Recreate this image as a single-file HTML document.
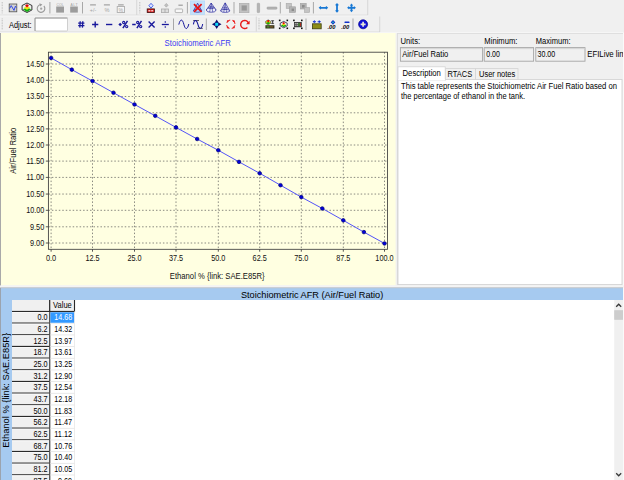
<!DOCTYPE html><html><head><meta charset="utf-8"><title>Stoichiometric AFR</title>
<style>html,body{margin:0;padding:0;background:#f0f0f0;overflow:hidden}svg{display:block;font-family:'Liberation Sans',sans-serif}text{font-family:'Liberation Sans',sans-serif}</style></head><body>
<svg width="624" height="480" viewBox="0 0 624 480">
<rect width="624" height="480" fill="#f0f0f0"/>
<g id="toolbars">
<rect x="0" y="15.3" width="368" height="1" fill="#fafafa"/>
<rect x="0" y="14.6" width="368" height="0.8" fill="#dcdcdc"/>
<rect x="0" y="31.6" width="380" height="0.9" fill="#d8d8d8"/>
<rect x="0" y="32.4" width="624" height="0.8" fill="#fbfbfb"/>
<rect x="136.4" y="0" width="0.8" height="15" fill="#cfcfcf"/>
<rect x="367.4" y="0" width="0.8" height="15" fill="#cfcfcf"/>
<rect x="255.8" y="16.5" width="0.8" height="15" fill="#cfcfcf"/>
<rect x="379.4" y="16.5" width="0.8" height="15.5" fill="#cfcfcf"/>
<line x1="2.2" y1="2" x2="2.2" y2="13.5" stroke="#b4b4b4" stroke-width="1" stroke-dasharray="0.8 0.8"/>
<line x1="139.8" y1="2" x2="139.8" y2="13.5" stroke="#b4b4b4" stroke-width="1" stroke-dasharray="0.8 0.8"/>
<line x1="2.2" y1="18.5" x2="2.2" y2="30.0" stroke="#b4b4b4" stroke-width="1" stroke-dasharray="0.8 0.8"/>
<line x1="259" y1="18.5" x2="259" y2="30.0" stroke="#b4b4b4" stroke-width="1" stroke-dasharray="0.8 0.8"/>
<rect x="49.4" y="2" width="1" height="11.5" fill="#a8a8a8"/>
<rect x="82.0" y="2" width="1" height="11.5" fill="#a8a8a8"/>
<rect x="186.9" y="2" width="1" height="11.5" fill="#a8a8a8"/>
<rect x="233.5" y="2" width="1" height="11.5" fill="#a8a8a8"/>
<rect x="279.8" y="2" width="1" height="11.5" fill="#a8a8a8"/>
<rect x="312.9" y="2" width="1" height="11.5" fill="#a8a8a8"/>
<rect x="173.0" y="18.5" width="1" height="11.5" fill="#a8a8a8"/>
<rect x="205.8" y="18.5" width="1" height="11.5" fill="#a8a8a8"/>
<rect x="305.5" y="18.5" width="1" height="11.5" fill="#a8a8a8"/>
<rect x="352.5" y="18.5" width="1" height="11.5" fill="#a8a8a8"/>
</g>
<g id="icons-row1">
<!-- chart icon -->
<rect x="9.2" y="4" width="7.6" height="7.8" fill="#d2d2d2" stroke="#505050" stroke-width="0.8"/>
<path d="M9.8 8.4 L11.2 5.6 L12.6 8 L14 10.4 L15.4 6.2 L16.2 7.6" fill="none" stroke="#3048e8" stroke-width="1"/>
<!-- cube icon -->
<path d="M27 3 L31.9 5.5 L31.9 10 L27 12.5 L22.1 10 L22.1 5.5 Z" fill="#f0f0f0" stroke="#1c1c1c" stroke-width="0.9"/>
<path d="M22.8 9.2 L27 7.4 L31.2 9.2 L27 12 Z" fill="#10b010"/>
<path d="M23.8 7.8 L27 6 L30.2 7.8 L27 9.8 Z" fill="#f4e418"/>
<path d="M25 5.8 L27 4 L29 5.8 L27 7.6 Z" fill="#e00808"/>
<!-- refresh grey -->
<path d="M43.9 6 A3.8 3.8 0 1 1 40.2 4.8" fill="none" stroke="#9c9c9c" stroke-width="1.15"/>
<path d="M39.4 3.2 L42.4 4.6 L40.2 6.6 Z" fill="#9c9c9c"/>
<circle cx="41.2" cy="8.7" r="1.15" fill="#a4a4a4"/>
<!-- COL / ALT -->
<text x="56.6" y="6" font-size="3.4" fill="#a0a0a0" textLength="7">COL</text>
<rect x="56.2" y="6.5" width="7.8" height="6.1" fill="#9c9c9c"/>
<text x="70.6" y="6" font-size="3.4" fill="#a0a0a0" textLength="7">ALT</text>
<rect x="70.2" y="6.5" width="7.6" height="6.1" fill="#9c9c9c"/>
<!-- +/- , %, [%] -->
<rect x="90" y="4.2" width="6" height="1.4" rx="0.5" fill="#a4a4a4"/>
<text x="93" y="11.6" font-size="5.4" fill="#a4a4a4" text-anchor="middle">+/-</text>
<rect x="103.8" y="4.2" width="6.2" height="1.4" rx="0.5" fill="#a4a4a4"/>
<text x="107" y="11.8" font-size="5.6" fill="#a4a4a4" text-anchor="middle">%</text>
<rect x="118" y="4.2" width="5.8" height="1.4" rx="0.5" fill="#a4a4a4"/>
<rect x="117.2" y="6.6" width="7.4" height="5.8" fill="#f6f6f6" stroke="#a4a4a4" stroke-width="0.8"/>
<text x="120.9" y="11.6" font-size="5.2" fill="#a4a4a4" text-anchor="middle">%</text>
<!-- red box w/ blue arrow -->
<path d="M151 3.3 L153.1 5.7 L151 8.1 L148.9 5.7 Z" fill="#dfe4ff" stroke="#3858e8" stroke-width="0.9"/>
<rect x="147.2" y="8.9" width="7.2" height="3.7" fill="#d81818" stroke="#3a1010" stroke-width="0.8"/>
<rect x="148.4" y="10.1" width="2" height="1.3" fill="#f6dada"/><rect x="151.2" y="10.1" width="2" height="1.3" fill="#f6dada"/>
<!-- grey diamond + box -->
<path d="M166.3 3.4 L168.1 5.3 L166.3 7.2 L164.5 5.3 Z" fill="#c0c0c0" stroke="#9c9c9c" stroke-width="0.5"/>
<rect x="161.4" y="9" width="7.2" height="3.6" fill="#dedede" stroke="#acacac" stroke-width="0.8"/>
<rect x="164.6" y="9" width="0.8" height="3.6" fill="#a6a6a6"/>
<!-- grey minus + box -->
<rect x="178.4" y="4.6" width="4.4" height="1.2" fill="#9c9c9c"/>
<rect x="175.2" y="9" width="7.4" height="3.6" rx="0.6" fill="#f8f8f8" stroke="#a6a6a6" stroke-width="0.8"/>
<!-- highlighted cone with X -->
<rect x="190.3" y="0.9" width="14.4" height="13.6" fill="#c4e0fa" stroke="#b2d6f8" stroke-width="0.6"/>
<path d="M197.6 3.2 L201.6 10.6 L193.6 10.6 Z" fill="#b4c8f4" stroke="#24249a" stroke-width="0.7"/>
<ellipse cx="197.6" cy="10.6" rx="4" ry="1.7" fill="#b4c8f4" stroke="#24249a" stroke-width="0.7"/>
<path d="M194 4.2 L201.6 12 M201.6 4.2 L194 12" stroke="#e81010" stroke-width="1.7" fill="none"/>
<!-- cone 1 -->
<path d="M211.2 3 L216 10 L206.4 10 Z" fill="#eceef8" stroke="#24249a" stroke-width="0.7"/>
<ellipse cx="211.2" cy="10" rx="4.7" ry="2.2" fill="#eceef8" stroke="#24249a" stroke-width="0.7"/>
<path d="M211.2 3.2 L209.6 12 M211.2 3.2 L212.8 12" stroke="#24249a" stroke-width="0.55" fill="none"/>
<ellipse cx="211.2" cy="7.6" rx="2.6" ry="1.1" fill="none" stroke="#24249a" stroke-width="0.55"/>
<!-- cone 2 -->
<path d="M225.2 2.8 L229.8 10.9 L220.6 10.9 Z" fill="#eceef8" stroke="#24249a" stroke-width="0.7"/>
<ellipse cx="225.2" cy="10.9" rx="4.5" ry="1.5" fill="#eceef8" stroke="#24249a" stroke-width="0.7"/>
<path d="M225.2 3 L223.8 12.2 M225.2 3 L226.6 12.2" stroke="#24249a" stroke-width="0.55" fill="none"/>
<ellipse cx="225.2" cy="8.2" rx="2.4" ry="0.9" fill="none" stroke="#24249a" stroke-width="0.55"/>
<!-- grey square, vbar, hbar -->
<rect x="239.4" y="3.3" width="9.6" height="9.4" fill="#c2c2c2" stroke="#a8a8a8" stroke-width="0.6"/>
<rect x="241.6" y="5.4" width="5.2" height="5.2" fill="#989898"/>
<rect x="257.2" y="3.2" width="2.4" height="9.4" rx="0.6" fill="#b4b4b4" stroke="#9a9a9a" stroke-width="0.5"/>
<rect x="267" y="7" width="10" height="2.2" rx="0.8" fill="#b4b4b4" stroke="#9a9a9a" stroke-width="0.5"/>
<!-- overlapping squares x2 -->
<rect x="286.2" y="3.4" width="5.2" height="5" fill="#c4c4c4" stroke="#a8a8a8" stroke-width="0.6"/>
<rect x="289.4" y="6.8" width="6.2" height="5.6" fill="#b4b4b4" stroke="#a0a0a0" stroke-width="0.6"/>
<rect x="291.6" y="8.6" width="2.4" height="2.4" fill="#8c8c8c"/>
<rect x="300.4" y="3.4" width="5.8" height="5.6" fill="#b4b4b4" stroke="#a0a0a0" stroke-width="0.6"/>
<rect x="302" y="5" width="2.6" height="2.6" fill="#8c8c8c"/>
<rect x="304.6" y="7.6" width="5" height="4.8" fill="#c4c4c4" stroke="#a8a8a8" stroke-width="0.6"/>
<!-- blue arrows -->
<path d="M318.6 7.8 L320.6 6 L321.2 6.9 L325.6 6.9 L326.2 6 L328.2 7.8 L326.2 9.6 L325.6 8.7 L321.2 8.7 L320.6 9.6 Z" fill="#1878d4"/>
<path d="M337 3.1 L338.8 5.1 L337.9 5.7 L337.9 10.1 L338.8 10.7 L337 12.7 L335.2 10.7 L336.1 10.1 L336.1 5.7 L335.2 5.1 Z" fill="#1878d4"/>
<path d="M351.5 3.4 L353.2 5.4 L352.4 5.4 L352.4 6.9 L353.9 6.9 L353.9 6.1 L355.9 7.8 L353.9 9.5 L353.9 8.7 L352.4 8.7 L352.4 10.2 L353.2 10.2 L351.5 12.2 L349.8 10.2 L350.6 10.2 L350.6 8.7 L349.1 8.7 L349.1 9.5 L347.1 7.8 L349.1 6.1 L349.1 6.9 L350.6 6.9 L350.6 5.4 L349.8 5.4 Z" fill="#1878d4"/>
</g>
<g id="icons-row2">
<!-- # -->
<path d="M80.2 21.2 L79.8 27.6 M82.8 21.2 L82.4 27.6 M78.2 23.2 L84.4 23.2 M78.2 25.6 L84.4 25.6" stroke="#18189c" stroke-width="1.3" fill="none"/>
<!-- + -->
<path d="M95.2 21.4 L95.2 27.6 M92.1 24.5 L98.3 24.5" stroke="#18189c" stroke-width="1.4" fill="none"/>
<!-- minus -->
<path d="M106 24.5 L112.3 24.5" stroke="#18189c" stroke-width="1.4" fill="none"/>
<!-- +% -->
<path d="M120.2 22.7 L122 24.5 L120.2 26.3 L118.4 24.5 Z" fill="#18189c"/>
<path d="M127.5 20.9 L122.9 28.1" stroke="#18189c" stroke-width="1.5" fill="none"/>
<circle cx="123.7" cy="22.5" r="1.1" fill="none" stroke="#18189c" stroke-width="1.1"/>
<circle cx="126.7" cy="26.6" r="1.1" fill="none" stroke="#18189c" stroke-width="1.1"/>
<!-- -% -->
<path d="M132.2 24.5 L135.7 24.5" stroke="#18189c" stroke-width="1.5" fill="none"/>
<path d="M141.5 20.9 L136.9 28.1" stroke="#18189c" stroke-width="1.5" fill="none"/>
<circle cx="137.7" cy="22.5" r="1.1" fill="none" stroke="#18189c" stroke-width="1.1"/>
<circle cx="140.7" cy="26.6" r="1.1" fill="none" stroke="#18189c" stroke-width="1.1"/>
<!-- x -->
<path d="M148.6 21.6 L154.6 27.4 M154.6 21.6 L148.6 27.4" stroke="#18189c" stroke-width="1.4" fill="none"/>
<!-- divide -->
<path d="M161.8 24.5 L168.8 24.5" stroke="#18189c" stroke-width="1.3" fill="none"/>
<circle cx="165.3" cy="22" r="0.8" fill="#18189c"/>
<circle cx="165.3" cy="27" r="0.8" fill="#18189c"/>
<!-- sine -->
<path d="M178.8 24.6 C180.2 18.6 182.4 18.6 183.8 24.2 C185.2 30 187.4 30 188.8 24" fill="none" stroke="#18189c" stroke-width="1.0"/>
<!-- step wave -->
<path d="M193.2 20.5 L199 20.5 M197 28.4 L202.8 28.4" fill="none" stroke="#505058" stroke-width="0.9"/>
<path d="M193.4 24.4 C194.2 19.2 196.6 19.2 197.9 24.4 C199.2 29.7 201.6 29.7 202.7 24" fill="none" stroke="#18189c" stroke-width="1.05"/>
<!-- diamond -->
<path d="M216.7 19.5 L218.5 22.5 L221.5 24.3 L218.5 26.1 L216.7 29.1 L214.9 26.1 L211.9 24.3 L214.9 22.5 Z" fill="#10106c"/>
<rect x="215.2" y="22.8" width="3" height="3" fill="#10d8f8"/>
<!-- red dashed circle -->
<circle cx="230.8" cy="24.3" r="4.3" fill="none" stroke="#f02828" stroke-width="1.05" stroke-dasharray="4.4 2.35" stroke-dashoffset="-1.2"/>
<g fill="#e82020"><circle cx="227.7" cy="21.2" r="0.9"/><circle cx="233.9" cy="21.2" r="0.9"/><circle cx="227.7" cy="27.4" r="0.9"/><circle cx="233.9" cy="27.4" r="0.9"/></g>
<!-- red arrow circle -->
<path d="M248.4 23 A4 4 0 1 0 247.4 27.4" fill="none" stroke="#e81818" stroke-width="1.4"/>
<path d="M246 24.2 L249.6 24.2 L249.6 20.8 Z" fill="#e81818"/>
<!-- icon A -->
<rect x="265.3" y="19.7" width="9.2" height="5.4" fill="#fafafa"/>
<path d="M268.2 19.9 L270.7 21.2 L270.7 23.4 L268.2 24.8 L265.7 23.4 L265.7 21.2 Z" fill="#f0e020" stroke="#202030" stroke-width="0.5"/>
<path d="M266 23 L268.2 21.9 L270.4 23 L268.2 24.6 Z" fill="#10a810"/>
<circle cx="268.2" cy="21.1" r="1.05" fill="#e00808"/>
<path d="M271.4 20.5 L273.8 20.5 L271.4 23.7 L273.8 23.7 Z" fill="#303030" stroke="#303030" stroke-width="0.5"/>
<rect x="265.4" y="25.2" width="9" height="3.3" fill="#34341c"/>
<rect x="266.6" y="26" width="3" height="1.7" fill="#4c7a2c"/>
<rect x="270" y="26" width="3.2" height="1.7" fill="#6a5024"/>
<!-- icon B -->
<g fill="#101010"><rect x="278.9" y="19.6" width="1.6" height="1.6"/><rect x="286.5" y="19.6" width="1.6" height="1.6"/><rect x="278.9" y="27.5" width="1.6" height="1.6"/><rect x="286.5" y="27.5" width="1.6" height="1.6"/></g>
<path d="M283.7 21.4 L287.2 23.2 L287.2 25.9 L283.7 27.8 L280.2 25.9 L280.2 23.2 Z" fill="#e8e8ee" stroke="#22223c" stroke-width="0.8"/>
<path d="M280.9 25.5 L283.7 24 L286.5 25.5 L283.7 27.3 Z" fill="#10b010"/>
<path d="M281.6 24.3 L283.7 23.1 L285.8 24.3 L283.7 25.7 Z" fill="#f4e418"/>
<path d="M282.4 23.1 L283.7 22 L285 23.1 L283.7 24.4 Z" fill="#e00808"/>
<!-- icon C -->
<g fill="#101010"><rect x="293.1" y="19.6" width="1.6" height="1.6"/><rect x="301" y="19.6" width="1.6" height="1.6"/><rect x="293.1" y="27.5" width="1.6" height="1.6"/><rect x="301" y="27.5" width="1.6" height="1.6"/></g>
<rect x="294.5" y="22.3" width="6.9" height="4.6" fill="#4a4a4a" stroke="#202020" stroke-width="0.6"/>
<rect x="295.3" y="23" width="1.2" height="1.2" fill="#c8c8c8"/><rect x="296.9" y="23" width="1.2" height="1.2" fill="#b8b8b8"/>
<rect x="295.3" y="24.8" width="1.2" height="1.2" fill="#a8a8a8"/><rect x="296.9" y="24.8" width="1.2" height="1.2" fill="#a0a0a0"/>
<rect x="298.5" y="23" width="1.1" height="3.2" fill="#38a028"/>
<rect x="299.9" y="23" width="1" height="3.2" fill="#b82818"/>
<!-- icon D -->
<rect x="312.5" y="23.8" width="8.7" height="5" fill="#8c8c18" stroke="#3c3c10" stroke-width="0.8"/>
<path d="M312.6 21.7 L314.8 20.1 L314.8 23.3 Z M321 21.7 L318.8 20.1 L318.8 23.3 Z" fill="#1030d0"/>
<path d="M314.6 21.7 L316 21.7 M317.6 21.7 L319 21.7" stroke="#1030d0" stroke-width="1.1"/>
<!-- icon E -->
<path d="M333 19.9 L335.3 22.3 L333 24.7 L330.7 22.3 Z" fill="#1030c8"/>
<circle cx="333" cy="22.3" r="0.9" fill="#20c0c0"/>
<text x="327.4" y="29.1" font-size="6" font-weight="bold" fill="#000" font-style="italic" textLength="8" lengthAdjust="spacingAndGlyphs">.00</text>
<!-- icon F -->
<rect x="344.5" y="21.5" width="5" height="1.6" rx="0.5" fill="#1030c8"/>
<text x="341.2" y="29.1" font-size="6" font-weight="bold" fill="#000" font-style="italic" textLength="8" lengthAdjust="spacingAndGlyphs">.00</text>
<!-- blue circle plus -->
<circle cx="363.1" cy="24.3" r="4.5" fill="#1010d8" stroke="#08088c" stroke-width="0.7"/>
<path d="M363.1 21.8 L363.1 26.8 M360.6 24.3 L365.6 24.3" stroke="#e8e8d8" stroke-width="1.7" fill="none"/>
</g>

<text x="9" y="27.7" font-size="9.2" fill="#000" text-anchor="start" textLength="22.6" lengthAdjust="spacingAndGlyphs" >Adjust:</text>
<rect x="35" y="18" width="32.5" height="13" rx="1" fill="#fff" stroke="#c4c4c4" stroke-width="0.8"/>
<path d="M35 31 L35 18 L67.5 18" fill="none" stroke="#8c8c8c" stroke-width="0.8"/>
<g id="chart">
<rect x="0" y="33" width="1" height="253" fill="#a9a9a9"/>
<rect x="1" y="33" width="394.6" height="252.4" fill="#ffffe1"/>
<line x1="51.10" y1="52.2" x2="51.10" y2="249.3" stroke="#8a8a80" stroke-width="1" stroke-dasharray="1.5 1.97"/>
<line x1="51.10" y1="249.3" x2="51.10" y2="251.70000000000002" stroke="#444" stroke-width="0.9"/>
<line x1="92.50" y1="52.2" x2="92.50" y2="249.3" stroke="#8a8a80" stroke-width="1" stroke-dasharray="1.5 1.97"/>
<line x1="92.50" y1="249.3" x2="92.50" y2="251.70000000000002" stroke="#444" stroke-width="0.9"/>
<line x1="134.50" y1="52.2" x2="134.50" y2="249.3" stroke="#8a8a80" stroke-width="1" stroke-dasharray="1.5 1.97"/>
<line x1="134.50" y1="249.3" x2="134.50" y2="251.70000000000002" stroke="#444" stroke-width="0.9"/>
<line x1="176.00" y1="52.2" x2="176.00" y2="249.3" stroke="#8a8a80" stroke-width="1" stroke-dasharray="1.5 1.97"/>
<line x1="176.00" y1="249.3" x2="176.00" y2="251.70000000000002" stroke="#444" stroke-width="0.9"/>
<line x1="218.30" y1="52.2" x2="218.30" y2="249.3" stroke="#8a8a80" stroke-width="1" stroke-dasharray="1.5 1.97"/>
<line x1="218.30" y1="249.3" x2="218.30" y2="251.70000000000002" stroke="#444" stroke-width="0.9"/>
<line x1="259.70" y1="52.2" x2="259.70" y2="249.3" stroke="#8a8a80" stroke-width="1" stroke-dasharray="1.5 1.97"/>
<line x1="259.70" y1="249.3" x2="259.70" y2="251.70000000000002" stroke="#444" stroke-width="0.9"/>
<line x1="301.30" y1="52.2" x2="301.30" y2="249.3" stroke="#8a8a80" stroke-width="1" stroke-dasharray="1.5 1.97"/>
<line x1="301.30" y1="249.3" x2="301.30" y2="251.70000000000002" stroke="#444" stroke-width="0.9"/>
<line x1="343.30" y1="52.2" x2="343.30" y2="249.3" stroke="#8a8a80" stroke-width="1" stroke-dasharray="1.5 1.97"/>
<line x1="343.30" y1="249.3" x2="343.30" y2="251.70000000000002" stroke="#444" stroke-width="0.9"/>
<line x1="384.50" y1="52.2" x2="384.50" y2="249.3" stroke="#8a8a80" stroke-width="1" stroke-dasharray="1.5 1.97"/>
<line x1="384.50" y1="249.3" x2="384.50" y2="251.70000000000002" stroke="#444" stroke-width="0.9"/>
<line x1="48.4" y1="243.00" x2="387.5" y2="243.00" stroke="#8a8a80" stroke-width="1" stroke-dasharray="1.5 1.97"/>
<line x1="45.8" y1="243.00" x2="48.4" y2="243.00" stroke="#444" stroke-width="0.9"/>
<line x1="48.4" y1="226.80" x2="387.5" y2="226.80" stroke="#8a8a80" stroke-width="1" stroke-dasharray="1.5 1.97"/>
<line x1="45.8" y1="226.80" x2="48.4" y2="226.80" stroke="#444" stroke-width="0.9"/>
<line x1="48.4" y1="210.30" x2="387.5" y2="210.30" stroke="#8a8a80" stroke-width="1" stroke-dasharray="1.5 1.97"/>
<line x1="45.8" y1="210.30" x2="48.4" y2="210.30" stroke="#444" stroke-width="0.9"/>
<line x1="48.4" y1="194.05" x2="387.5" y2="194.05" stroke="#8a8a80" stroke-width="1" stroke-dasharray="1.5 1.97"/>
<line x1="45.8" y1="194.05" x2="48.4" y2="194.05" stroke="#444" stroke-width="0.9"/>
<line x1="48.4" y1="177.40" x2="387.5" y2="177.40" stroke="#8a8a80" stroke-width="1" stroke-dasharray="1.5 1.97"/>
<line x1="45.8" y1="177.40" x2="48.4" y2="177.40" stroke="#444" stroke-width="0.9"/>
<line x1="48.4" y1="161.10" x2="387.5" y2="161.10" stroke="#8a8a80" stroke-width="1" stroke-dasharray="1.5 1.97"/>
<line x1="45.8" y1="161.10" x2="48.4" y2="161.10" stroke="#444" stroke-width="0.9"/>
<line x1="48.4" y1="145.00" x2="387.5" y2="145.00" stroke="#8a8a80" stroke-width="1" stroke-dasharray="1.5 1.97"/>
<line x1="45.8" y1="145.00" x2="48.4" y2="145.00" stroke="#444" stroke-width="0.9"/>
<line x1="48.4" y1="128.90" x2="387.5" y2="128.90" stroke="#8a8a80" stroke-width="1" stroke-dasharray="1.5 1.97"/>
<line x1="45.8" y1="128.90" x2="48.4" y2="128.90" stroke="#444" stroke-width="0.9"/>
<line x1="48.4" y1="112.80" x2="387.5" y2="112.80" stroke="#8a8a80" stroke-width="1" stroke-dasharray="1.5 1.97"/>
<line x1="45.8" y1="112.80" x2="48.4" y2="112.80" stroke="#444" stroke-width="0.9"/>
<line x1="48.4" y1="96.50" x2="387.5" y2="96.50" stroke="#8a8a80" stroke-width="1" stroke-dasharray="1.5 1.97"/>
<line x1="45.8" y1="96.50" x2="48.4" y2="96.50" stroke="#444" stroke-width="0.9"/>
<line x1="48.4" y1="80.30" x2="387.5" y2="80.30" stroke="#8a8a80" stroke-width="1" stroke-dasharray="1.5 1.97"/>
<line x1="45.8" y1="80.30" x2="48.4" y2="80.30" stroke="#444" stroke-width="0.9"/>
<line x1="48.4" y1="64.00" x2="387.5" y2="64.00" stroke="#8a8a80" stroke-width="1" stroke-dasharray="1.5 1.97"/>
<line x1="45.8" y1="64.00" x2="48.4" y2="64.00" stroke="#444" stroke-width="0.9"/>
<rect x="48.4" y="52.2" width="339.1" height="197.10000000000002" fill="none" stroke="#3c3c3c" stroke-width="0.85"/>
<polyline fill="none" stroke="#5454f8" stroke-width="1.0" points="51.10,57.93 71.80,69.67 92.50,81.07 113.50,92.74 134.50,104.45 155.25,115.82 176.00,127.41 197.15,139.00 218.30,150.27 239.00,161.88 259.70,173.29 280.50,185.19 301.30,197.10 322.30,208.47 343.30,220.33 363.90,232.11 384.50,243.45"/>
<circle cx="51.10" cy="57.93" r="1.8" fill="#0000dc" stroke="#000070" stroke-width="0.7"/>
<circle cx="71.80" cy="69.67" r="1.8" fill="#0000dc" stroke="#000070" stroke-width="0.7"/>
<circle cx="92.50" cy="81.07" r="1.8" fill="#0000dc" stroke="#000070" stroke-width="0.7"/>
<circle cx="113.50" cy="92.74" r="1.8" fill="#0000dc" stroke="#000070" stroke-width="0.7"/>
<circle cx="134.50" cy="104.45" r="1.8" fill="#0000dc" stroke="#000070" stroke-width="0.7"/>
<circle cx="155.25" cy="115.82" r="1.8" fill="#0000dc" stroke="#000070" stroke-width="0.7"/>
<circle cx="176.00" cy="127.41" r="1.8" fill="#0000dc" stroke="#000070" stroke-width="0.7"/>
<circle cx="197.15" cy="139.00" r="1.8" fill="#0000dc" stroke="#000070" stroke-width="0.7"/>
<circle cx="218.30" cy="150.27" r="1.8" fill="#0000dc" stroke="#000070" stroke-width="0.7"/>
<circle cx="239.00" cy="161.88" r="1.8" fill="#0000dc" stroke="#000070" stroke-width="0.7"/>
<circle cx="259.70" cy="173.29" r="1.8" fill="#0000dc" stroke="#000070" stroke-width="0.7"/>
<circle cx="280.50" cy="185.19" r="1.8" fill="#0000dc" stroke="#000070" stroke-width="0.7"/>
<circle cx="301.30" cy="197.10" r="1.8" fill="#0000dc" stroke="#000070" stroke-width="0.7"/>
<circle cx="322.30" cy="208.47" r="1.8" fill="#0000dc" stroke="#000070" stroke-width="0.7"/>
<circle cx="343.30" cy="220.33" r="1.8" fill="#0000dc" stroke="#000070" stroke-width="0.7"/>
<circle cx="363.90" cy="232.11" r="1.8" fill="#0000dc" stroke="#000070" stroke-width="0.7"/>
<circle cx="384.50" cy="243.45" r="1.8" fill="#0000dc" stroke="#000070" stroke-width="0.7"/>
<text x="44.2" y="245.75" font-size="8.7" fill="#111" text-anchor="end" textLength="14.2" lengthAdjust="spacingAndGlyphs" >9.00</text>
<text x="44.2" y="229.55" font-size="8.7" fill="#111" text-anchor="end" textLength="14.2" lengthAdjust="spacingAndGlyphs" >9.50</text>
<text x="44.2" y="213.05" font-size="8.7" fill="#111" text-anchor="end" textLength="18" lengthAdjust="spacingAndGlyphs" >10.00</text>
<text x="44.2" y="196.8" font-size="8.7" fill="#111" text-anchor="end" textLength="18" lengthAdjust="spacingAndGlyphs" >10.50</text>
<text x="44.2" y="180.15" font-size="8.7" fill="#111" text-anchor="end" textLength="18" lengthAdjust="spacingAndGlyphs" >11.00</text>
<text x="44.2" y="163.85" font-size="8.7" fill="#111" text-anchor="end" textLength="18" lengthAdjust="spacingAndGlyphs" >11.50</text>
<text x="44.2" y="147.75" font-size="8.7" fill="#111" text-anchor="end" textLength="18" lengthAdjust="spacingAndGlyphs" >12.00</text>
<text x="44.2" y="131.65" font-size="8.7" fill="#111" text-anchor="end" textLength="18" lengthAdjust="spacingAndGlyphs" >12.50</text>
<text x="44.2" y="115.55" font-size="8.7" fill="#111" text-anchor="end" textLength="18" lengthAdjust="spacingAndGlyphs" >13.00</text>
<text x="44.2" y="99.25" font-size="8.7" fill="#111" text-anchor="end" textLength="18" lengthAdjust="spacingAndGlyphs" >13.50</text>
<text x="44.2" y="83.05" font-size="8.7" fill="#111" text-anchor="end" textLength="18" lengthAdjust="spacingAndGlyphs" >14.00</text>
<text x="44.2" y="66.75" font-size="8.7" fill="#111" text-anchor="end" textLength="18" lengthAdjust="spacingAndGlyphs" >14.50</text>
<text x="51.1" y="260.6" font-size="8.7" fill="#111" text-anchor="middle" textLength="10.2" lengthAdjust="spacingAndGlyphs" >0.0</text>
<text x="92.5" y="260.6" font-size="8.7" fill="#111" text-anchor="middle" textLength="14.2" lengthAdjust="spacingAndGlyphs" >12.5</text>
<text x="134.5" y="260.6" font-size="8.7" fill="#111" text-anchor="middle" textLength="14.2" lengthAdjust="spacingAndGlyphs" >25.0</text>
<text x="176.0" y="260.6" font-size="8.7" fill="#111" text-anchor="middle" textLength="14.2" lengthAdjust="spacingAndGlyphs" >37.5</text>
<text x="218.3" y="260.6" font-size="8.7" fill="#111" text-anchor="middle" textLength="14.2" lengthAdjust="spacingAndGlyphs" >50.0</text>
<text x="259.7" y="260.6" font-size="8.7" fill="#111" text-anchor="middle" textLength="14.2" lengthAdjust="spacingAndGlyphs" >62.5</text>
<text x="301.3" y="260.6" font-size="8.7" fill="#111" text-anchor="middle" textLength="14.2" lengthAdjust="spacingAndGlyphs" >75.0</text>
<text x="343.3" y="260.6" font-size="8.7" fill="#111" text-anchor="middle" textLength="14.2" lengthAdjust="spacingAndGlyphs" >87.5</text>
<text x="384.5" y="260.6" font-size="8.7" fill="#111" text-anchor="middle" textLength="18.3" lengthAdjust="spacingAndGlyphs" >100.0</text>
<text x="197.7" y="46.1" font-size="8.3" fill="#3a3af5" text-anchor="middle" textLength="66.2" lengthAdjust="spacingAndGlyphs" >Stoichiometric AFR</text>
<text x="217.2" y="279.3" font-size="8.3" fill="#111" text-anchor="middle" textLength="94.8" lengthAdjust="spacingAndGlyphs" >Ethanol % {link: SAE.E85R}</text>
<text transform="translate(15.6,150.8) rotate(-90)" font-size="8.3" text-anchor="middle" textLength="46" lengthAdjust="spacingAndGlyphs" fill="#111">Air/Fuel Ratio</text>
</g>
<g id="panel">
<rect x="397" y="33.2" width="227" height="0.8" fill="#dadada"/>
<rect x="397" y="33.2" width="0.8" height="252" fill="#dadada"/>
<text x="400.5" y="44.2" font-size="8.3" fill="#000" text-anchor="start" textLength="19.6" lengthAdjust="spacingAndGlyphs" >Units:</text>
<text x="484.3" y="44.2" font-size="8.3" fill="#000" text-anchor="start" textLength="33.2" lengthAdjust="spacingAndGlyphs" >Minimum:</text>
<text x="535.8" y="44.2" font-size="8.3" fill="#000" text-anchor="start" textLength="34.8" lengthAdjust="spacingAndGlyphs" >Maximum:</text>
<rect x="400.4" y="47.6" width="82.2" height="13.6" fill="#f0f0f0" stroke="#a5a5a5" stroke-width="0.9"/>
<rect x="401.2" y="48.3" width="80.60000000000001" height="0.8" fill="#cfcfcf"/>
<rect x="484.2" y="47.6" width="49.4" height="13.6" fill="#f0f0f0" stroke="#a5a5a5" stroke-width="0.9"/>
<rect x="485.0" y="48.3" width="47.8" height="0.8" fill="#cfcfcf"/>
<rect x="535.8" y="47.6" width="49.2" height="13.6" fill="#f0f0f0" stroke="#a5a5a5" stroke-width="0.9"/>
<rect x="536.5999999999999" y="48.3" width="47.6" height="0.8" fill="#cfcfcf"/>
<text x="402.3" y="57.2" font-size="8.3" fill="#000" text-anchor="start" textLength="46" lengthAdjust="spacingAndGlyphs" >Air/Fuel Ratio</text>
<text x="486.3" y="57.2" font-size="8.3" fill="#000" text-anchor="start" textLength="13.6" lengthAdjust="spacingAndGlyphs" >0.00</text>
<text x="537.6" y="57.2" font-size="8.3" fill="#000" text-anchor="start" textLength="17.6" lengthAdjust="spacingAndGlyphs" >30.00</text>
<text x="587.2" y="57.2" font-size="8.3" fill="#000" text-anchor="start" textLength="46.4" lengthAdjust="spacingAndGlyphs" >EFILive limits</text>
<rect x="398" y="79.4" width="224" height="205.2" fill="#fff" stroke="#d0d0d0" stroke-width="0.8"/>
<rect x="445.2" y="68.6" width="30.4" height="11" fill="#f0f0f0" stroke="#d4d4d4" stroke-width="0.8"/>
<rect x="475.6" y="68.6" width="42.4" height="11" fill="#f0f0f0" stroke="#d4d4d4" stroke-width="0.8"/>
<rect x="398" y="66.8" width="47.2" height="13.6" fill="#fff" stroke="#d4d4d4" stroke-width="0.8"/>
<rect x="398.5" y="79" width="46.3" height="1.6" fill="#fff"/>
<text x="402.6" y="75.9" font-size="8.3" fill="#000" text-anchor="start" textLength="38.3" lengthAdjust="spacingAndGlyphs" >Description</text>
<text x="447.6" y="77.2" font-size="8.3" fill="#000" text-anchor="start" textLength="24.6" lengthAdjust="spacingAndGlyphs" >RTACS</text>
<text x="479" y="77.2" font-size="8.3" fill="#000" text-anchor="start" textLength="36.2" lengthAdjust="spacingAndGlyphs" >User notes</text>
<text x="401" y="89.3" font-size="8.3" fill="#000" text-anchor="start" textLength="216" lengthAdjust="spacingAndGlyphs" >This table represents the Stoichiometric Air Fuel Ratio based on</text>
<text x="401" y="98.9" font-size="8.3" fill="#000" text-anchor="start" textLength="124" lengthAdjust="spacingAndGlyphs" >the percentage of ethanol in the tank.</text>
<rect x="623" y="33" width="1" height="447" fill="#fafafa"/>
</g>
<g id="table">
<rect x="0" y="285.4" width="624" height="2.4" fill="#f4f4f4"/>
<rect x="0" y="287.6" width="623" height="0.9" fill="#8f9aa6"/>
<rect x="0" y="288.3" width="623" height="192" fill="#a6caf0"/>
<rect x="0" y="288" width="0.9" height="192" fill="#9a9fa6"/>
<rect x="12" y="300" width="604" height="180" fill="#fff"/>
<rect x="614.2" y="300" width="8.8" height="180" fill="#f0f0f0"/>
<rect x="614.2" y="310.2" width="8.8" height="9.6" fill="#cdcdcd"/>
<path d="M616.2 306.7 L618.7 304.2 L621.2 306.7" fill="none" stroke="#383838" stroke-width="1.3"/>
<path d="M616.2 473.3 L618.7 475.8 L621.2 473.3" fill="none" stroke="#383838" stroke-width="1.3"/>
<text x="312.1" y="297.6" font-size="9.8" fill="#000" text-anchor="middle" textLength="142.4" lengthAdjust="spacingAndGlyphs" >Stoichiometric AFR (Air/Fuel Ratio)</text>
<text transform="translate(8.7,390.3) rotate(-90)" font-size="9.7" text-anchor="middle" textLength="115" lengthAdjust="spacingAndGlyphs" fill="#000">Ethanol % {link: SAE.E85R}</text>
<rect x="12" y="300" width="37.6" height="12" fill="#f0f0f0"/>
<rect x="50.2" y="300" width="24.4" height="12" fill="#f0f0f0"/>
<rect x="12" y="310.9" width="63" height="1.2" fill="#2a2a2a"/>
<rect x="49.05" y="300" width="1.25" height="180" fill="#2a2a2a"/>
<rect x="73.95" y="300" width="1.1" height="12" fill="#2a2a2a"/>
<text x="53.1" y="308.3" font-size="8.4" fill="#000" text-anchor="start" textLength="18.7" lengthAdjust="spacingAndGlyphs" >Value</text>
<rect x="12" y="312.00" width="37.2" height="11.67" fill="#f0f0f0"/>
<rect x="12" y="312.10" width="37.1" height="0.8" fill="#fbfbfb"/>
<rect x="12" y="322.52" width="37.2" height="1.3" fill="#2a2a2a"/>
<rect x="50.2" y="322.87" width="24.4" height="0.8" fill="#e4e4e4"/>
<rect x="50.4" y="312.30" width="23.8" height="10.47" fill="#3399ff"/>
<text x="47.6" y="320.4" font-size="8.4" fill="#000" text-anchor="end" textLength="10" lengthAdjust="spacingAndGlyphs" >0.0</text>
<text x="72.1" y="320.4" font-size="8.4" fill="#fff" text-anchor="end" textLength="17.8" lengthAdjust="spacingAndGlyphs" >14.68</text>
<rect x="12" y="323.67" width="37.2" height="11.67" fill="#f0f0f0"/>
<rect x="12" y="323.77" width="37.1" height="0.8" fill="#fbfbfb"/>
<rect x="12" y="334.19" width="37.2" height="1.3" fill="#2a2a2a"/>
<rect x="50.2" y="334.54" width="24.4" height="0.8" fill="#e4e4e4"/>
<text x="47.6" y="332.07" font-size="8.4" fill="#000" text-anchor="end" textLength="10" lengthAdjust="spacingAndGlyphs" >6.2</text>
<text x="72.1" y="332.07" font-size="8.4" fill="#000" text-anchor="end" textLength="17.8" lengthAdjust="spacingAndGlyphs" >14.32</text>
<rect x="12" y="335.34" width="37.2" height="11.67" fill="#f0f0f0"/>
<rect x="12" y="335.44" width="37.1" height="0.8" fill="#fbfbfb"/>
<rect x="12" y="345.86" width="37.2" height="1.3" fill="#2a2a2a"/>
<rect x="50.2" y="346.21" width="24.4" height="0.8" fill="#e4e4e4"/>
<text x="47.6" y="343.74" font-size="8.4" fill="#000" text-anchor="end" textLength="14.2" lengthAdjust="spacingAndGlyphs" >12.5</text>
<text x="72.1" y="343.74" font-size="8.4" fill="#000" text-anchor="end" textLength="17.8" lengthAdjust="spacingAndGlyphs" >13.97</text>
<rect x="12" y="347.01" width="37.2" height="11.67" fill="#f0f0f0"/>
<rect x="12" y="347.11" width="37.1" height="0.8" fill="#fbfbfb"/>
<rect x="12" y="357.53" width="37.2" height="1.3" fill="#2a2a2a"/>
<rect x="50.2" y="357.88" width="24.4" height="0.8" fill="#e4e4e4"/>
<text x="47.6" y="355.41" font-size="8.4" fill="#000" text-anchor="end" textLength="14.2" lengthAdjust="spacingAndGlyphs" >18.7</text>
<text x="72.1" y="355.41" font-size="8.4" fill="#000" text-anchor="end" textLength="17.8" lengthAdjust="spacingAndGlyphs" >13.61</text>
<rect x="12" y="358.68" width="37.2" height="11.67" fill="#f0f0f0"/>
<rect x="12" y="358.78" width="37.1" height="0.8" fill="#fbfbfb"/>
<rect x="12" y="369.20" width="37.2" height="1.3" fill="#2a2a2a"/>
<rect x="50.2" y="369.55" width="24.4" height="0.8" fill="#e4e4e4"/>
<text x="47.6" y="367.08" font-size="8.4" fill="#000" text-anchor="end" textLength="14.2" lengthAdjust="spacingAndGlyphs" >25.0</text>
<text x="72.1" y="367.08" font-size="8.4" fill="#000" text-anchor="end" textLength="17.8" lengthAdjust="spacingAndGlyphs" >13.25</text>
<rect x="12" y="370.35" width="37.2" height="11.67" fill="#f0f0f0"/>
<rect x="12" y="370.45" width="37.1" height="0.8" fill="#fbfbfb"/>
<rect x="12" y="380.87" width="37.2" height="1.3" fill="#2a2a2a"/>
<rect x="50.2" y="381.22" width="24.4" height="0.8" fill="#e4e4e4"/>
<text x="47.6" y="378.75" font-size="8.4" fill="#000" text-anchor="end" textLength="14.2" lengthAdjust="spacingAndGlyphs" >31.2</text>
<text x="72.1" y="378.75" font-size="8.4" fill="#000" text-anchor="end" textLength="17.8" lengthAdjust="spacingAndGlyphs" >12.90</text>
<rect x="12" y="382.02" width="37.2" height="11.67" fill="#f0f0f0"/>
<rect x="12" y="382.12" width="37.1" height="0.8" fill="#fbfbfb"/>
<rect x="12" y="392.54" width="37.2" height="1.3" fill="#2a2a2a"/>
<rect x="50.2" y="392.89" width="24.4" height="0.8" fill="#e4e4e4"/>
<text x="47.6" y="390.42" font-size="8.4" fill="#000" text-anchor="end" textLength="14.2" lengthAdjust="spacingAndGlyphs" >37.5</text>
<text x="72.1" y="390.42" font-size="8.4" fill="#000" text-anchor="end" textLength="17.8" lengthAdjust="spacingAndGlyphs" >12.54</text>
<rect x="12" y="393.69" width="37.2" height="11.67" fill="#f0f0f0"/>
<rect x="12" y="393.79" width="37.1" height="0.8" fill="#fbfbfb"/>
<rect x="12" y="404.21" width="37.2" height="1.3" fill="#2a2a2a"/>
<rect x="50.2" y="404.56" width="24.4" height="0.8" fill="#e4e4e4"/>
<text x="47.6" y="402.09" font-size="8.4" fill="#000" text-anchor="end" textLength="14.2" lengthAdjust="spacingAndGlyphs" >43.7</text>
<text x="72.1" y="402.09" font-size="8.4" fill="#000" text-anchor="end" textLength="17.8" lengthAdjust="spacingAndGlyphs" >12.18</text>
<rect x="12" y="405.36" width="37.2" height="11.67" fill="#f0f0f0"/>
<rect x="12" y="405.46" width="37.1" height="0.8" fill="#fbfbfb"/>
<rect x="12" y="415.88" width="37.2" height="1.3" fill="#2a2a2a"/>
<rect x="50.2" y="416.23" width="24.4" height="0.8" fill="#e4e4e4"/>
<text x="47.6" y="413.76" font-size="8.4" fill="#000" text-anchor="end" textLength="14.2" lengthAdjust="spacingAndGlyphs" >50.0</text>
<text x="72.1" y="413.76" font-size="8.4" fill="#000" text-anchor="end" textLength="17.8" lengthAdjust="spacingAndGlyphs" >11.83</text>
<rect x="12" y="417.03" width="37.2" height="11.67" fill="#f0f0f0"/>
<rect x="12" y="417.13" width="37.1" height="0.8" fill="#fbfbfb"/>
<rect x="12" y="427.55" width="37.2" height="1.3" fill="#2a2a2a"/>
<rect x="50.2" y="427.90" width="24.4" height="0.8" fill="#e4e4e4"/>
<text x="47.6" y="425.43" font-size="8.4" fill="#000" text-anchor="end" textLength="14.2" lengthAdjust="spacingAndGlyphs" >56.2</text>
<text x="72.1" y="425.43" font-size="8.4" fill="#000" text-anchor="end" textLength="17.8" lengthAdjust="spacingAndGlyphs" >11.47</text>
<rect x="12" y="428.70" width="37.2" height="11.67" fill="#f0f0f0"/>
<rect x="12" y="428.80" width="37.1" height="0.8" fill="#fbfbfb"/>
<rect x="12" y="439.22" width="37.2" height="1.3" fill="#2a2a2a"/>
<rect x="50.2" y="439.57" width="24.4" height="0.8" fill="#e4e4e4"/>
<text x="47.6" y="437.1" font-size="8.4" fill="#000" text-anchor="end" textLength="14.2" lengthAdjust="spacingAndGlyphs" >62.5</text>
<text x="72.1" y="437.1" font-size="8.4" fill="#000" text-anchor="end" textLength="17.8" lengthAdjust="spacingAndGlyphs" >11.12</text>
<rect x="12" y="440.37" width="37.2" height="11.67" fill="#f0f0f0"/>
<rect x="12" y="440.47" width="37.1" height="0.8" fill="#fbfbfb"/>
<rect x="12" y="450.89" width="37.2" height="1.3" fill="#2a2a2a"/>
<rect x="50.2" y="451.24" width="24.4" height="0.8" fill="#e4e4e4"/>
<text x="47.6" y="448.77" font-size="8.4" fill="#000" text-anchor="end" textLength="14.2" lengthAdjust="spacingAndGlyphs" >68.7</text>
<text x="72.1" y="448.77" font-size="8.4" fill="#000" text-anchor="end" textLength="17.8" lengthAdjust="spacingAndGlyphs" >10.76</text>
<rect x="12" y="452.04" width="37.2" height="11.67" fill="#f0f0f0"/>
<rect x="12" y="452.14" width="37.1" height="0.8" fill="#fbfbfb"/>
<rect x="12" y="462.56" width="37.2" height="1.3" fill="#2a2a2a"/>
<rect x="50.2" y="462.91" width="24.4" height="0.8" fill="#e4e4e4"/>
<text x="47.6" y="460.44" font-size="8.4" fill="#000" text-anchor="end" textLength="14.2" lengthAdjust="spacingAndGlyphs" >75.0</text>
<text x="72.1" y="460.44" font-size="8.4" fill="#000" text-anchor="end" textLength="17.8" lengthAdjust="spacingAndGlyphs" >10.40</text>
<rect x="12" y="463.71" width="37.2" height="11.67" fill="#f0f0f0"/>
<rect x="12" y="463.81" width="37.1" height="0.8" fill="#fbfbfb"/>
<rect x="12" y="474.23" width="37.2" height="1.3" fill="#2a2a2a"/>
<rect x="50.2" y="474.58" width="24.4" height="0.8" fill="#e4e4e4"/>
<text x="47.6" y="472.11" font-size="8.4" fill="#000" text-anchor="end" textLength="14.2" lengthAdjust="spacingAndGlyphs" >81.2</text>
<text x="72.1" y="472.11" font-size="8.4" fill="#000" text-anchor="end" textLength="17.8" lengthAdjust="spacingAndGlyphs" >10.05</text>
<rect x="12" y="475.38" width="37.2" height="11.67" fill="#f0f0f0"/>
<rect x="12" y="475.48" width="37.1" height="0.8" fill="#fbfbfb"/>
<rect x="12" y="485.90" width="37.2" height="1.3" fill="#2a2a2a"/>
<rect x="50.2" y="486.25" width="24.4" height="0.8" fill="#e4e4e4"/>
<text x="47.6" y="483.78" font-size="8.4" fill="#000" text-anchor="end" textLength="14.2" lengthAdjust="spacingAndGlyphs" >87.5</text>
<text x="72.1" y="483.78" font-size="8.4" fill="#000" text-anchor="end" textLength="14" lengthAdjust="spacingAndGlyphs" >9.69</text>
<rect x="74.2" y="311.3" width="0.7" height="169" fill="#e4e4e4"/>
</g>
</svg></body></html>
